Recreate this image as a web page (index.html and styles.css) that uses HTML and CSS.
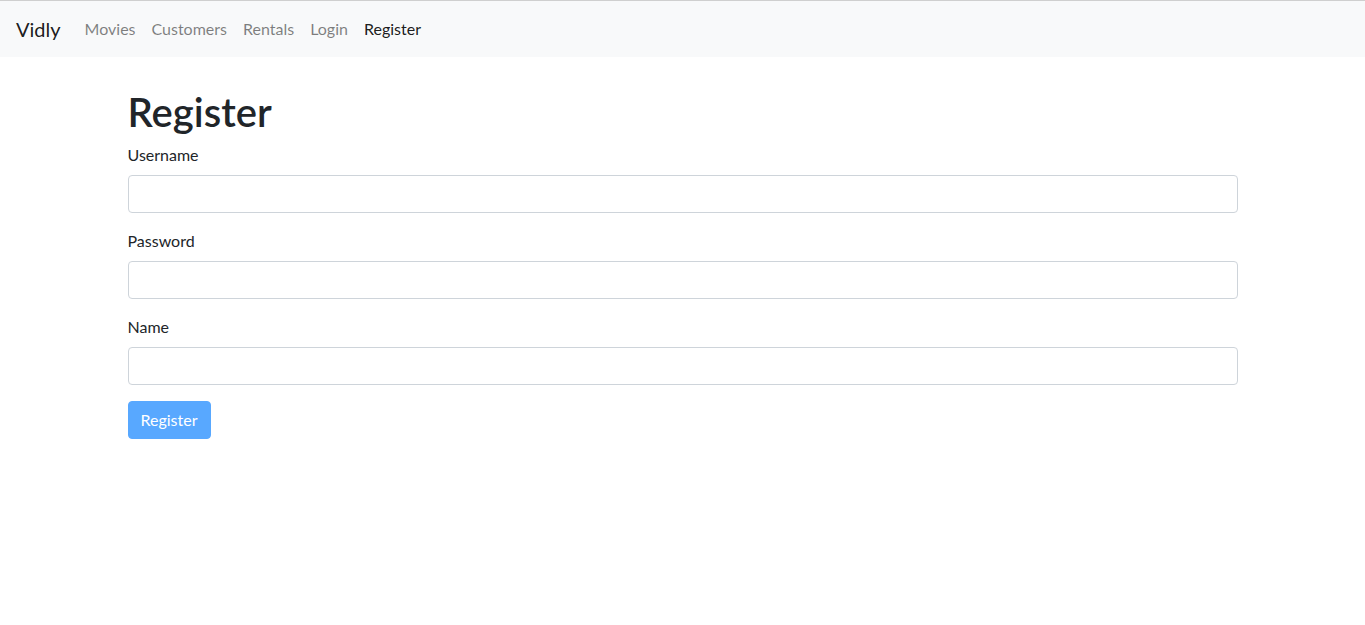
FILE: index.html
```html
<!DOCTYPE html>
<html lang="en">
<head>
<meta charset="utf-8">
<title>Vidly</title>
<link rel="stylesheet" href="styles.css">
</head>
<body>
<nav class="navbar">
  <a class="brand" href="#">Vidly</a>
  <ul class="nav">
    <li><a class="nav-link" href="#">Movies</a></li>
    <li><a class="nav-link" href="#">Customers</a></li>
    <li><a class="nav-link" href="#">Rentals</a></li>
    <li><a class="nav-link" href="#">Login</a></li>
    <li><a class="nav-link active" href="#">Register</a></li>
  </ul>
</nav>
<main class="container">
  <h1 class="title">Register</h1>
  <form class="form">
    <div class="form-group">
      <label class="label" for="username">Username</label>
      <input class="input" id="username" type="text">
    </div>
    <div class="form-group">
      <label class="label" for="password">Password</label>
      <input class="input" id="password" type="password">
    </div>
    <div class="form-group">
      <label class="label" for="name">Name</label>
      <input class="input" id="name" type="text">
    </div>
    <button class="btn" type="submit" disabled>Register</button>
  </form>
</main>
</body>
</html>
```
FILE: styles.css
```css
* { box-sizing: border-box; }
html, body { margin: 0; }
body {
  font-family: Lato, "Noto Sans", sans-serif;
  font-size: 16px;
  line-height: 1.5;
  color: #212529;
  background: #fff;
  border-top: 1px solid #cfcfcf;
}
.navbar {
  display: flex;
  align-items: center;
  height: 56px;
  padding: 8px 16px;
  background: #f8f9fa;
}
.brand {
  font-size: 20px;
  color: rgba(0,0,0,.9);
  text-decoration: none;
  margin-right: 16px;
  line-height: 1.5;
}
.nav {
  display: flex;
  list-style: none;
  margin: 0;
  padding: 0;
}
.nav-link {
  display: block;
  padding: 8px;
  color: rgba(0,0,0,.5);
  text-decoration: none;
}
.nav-link.active { color: rgba(0,0,0,.9); }
.container {
  max-width: 1140px;
  margin: 0 auto;
  padding: 31px 15px 0;
}
.title {
  margin: 0 0 7px;
  font-size: 40px;
  font-weight: 600;
  line-height: 1.2;
}
.form-group { margin-bottom: 16px; }
.label {
  display: inline-block;
  margin-bottom: 8px;
}
.input {
  display: block;
  width: 100%;
  height: 38px;
  padding: 6px 12px;
  font: inherit;
  color: #495057;
  background: #fff;
  border: 1px solid #ced4da;
  border-radius: 4px;
}
.btn {
  display: inline-block;
  font: inherit;
  padding: 6px 12px;
  color: #fff;
  background: #007bff;
  border: 1px solid #007bff;
  border-radius: 4px;
  opacity: .65;
  line-height: 1.5;
}
```
